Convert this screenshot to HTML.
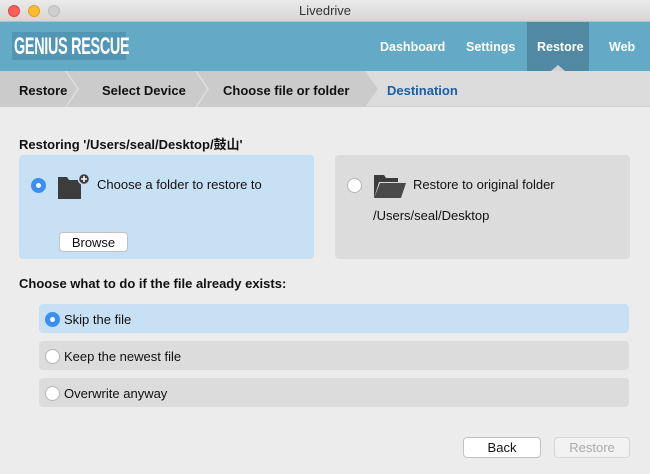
<!DOCTYPE html>
<html><head><style>
*{margin:0;padding:0;box-sizing:border-box}
body{width:650px;height:474px;overflow:hidden;background:#ececec;font-family:"Liberation Sans","Noto Sans CJK SC",sans-serif;font-size:13px;color:#111;position:relative}
.abs{position:absolute}
.title{top:0;left:0;width:650px;height:22px;background:linear-gradient(#ebebeb,#d6d6d6);border-bottom:1px solid #bdbdbd;text-align:center;line-height:22px;font-size:13px;color:#333}
.dot{top:5px;width:12px;height:12px;border-radius:50%}
.hdr{top:22px;left:0;width:650px;height:49px;background:#64a9c6}
.nav{top:22px;height:49px;line-height:51px;color:#fff;font-weight:bold;font-size:12.5px}
.bc{top:71px;left:0;width:650px;height:36px;background:#dcdcdc;border-bottom:1px solid #d0d0d0}
.bct{top:71px;line-height:39px;font-weight:bold;font-size:13px}
.radio{width:15px;height:15px;border-radius:50%;background:#fff;border:1px solid #b5b5b5}
.radio.on{background:#3a8ef6;border-color:#3a8ef6}
.radio.on::after{content:"";position:absolute;left:4px;top:4px;width:5px;height:5px;border-radius:50%;background:#fff}
.btn{background:#fff;border:1px solid #c2c2c2;border-radius:4px;text-align:center;font-size:13px}
.opt{left:39px;width:590px;height:29px;border-radius:4px;background:#dcdcdc;line-height:32px;padding-left:25px;font-size:13px}
</style></head><body>
<div class="abs title">Livedrive</div>
<div class="abs dot" style="left:8px;background:#fc5f57;border:1px solid #e0443e"></div>
<div class="abs dot" style="left:28px;background:#fdbc2e;border:1px solid #dea123"></div>
<div class="abs dot" style="left:48px;background:#cfcfcf;border:1px solid #bcbcbc"></div>
<div class="abs hdr"></div>
<div class="abs" style="left:12px;top:32px;width:114px;height:28px;background:#5296b6"></div>
<div class="abs" style="left:14px;top:32px;line-height:30px;color:#fff;font-weight:bold;font-size:24px;letter-spacing:-0.5px;transform:scaleX(.6);transform-origin:left;white-space:nowrap">GENIUS RESCUE</div>
<div class="abs" style="left:527px;top:22px;width:62px;height:49px;background:#5189a3"></div>
<div class="abs" style="left:551px;top:65px;width:0;height:0;border-left:7px solid transparent;border-right:7px solid transparent;border-bottom:6px solid #d2d2d2"></div>
<div class="abs nav" style="left:380px">Dashboard</div>
<div class="abs nav" style="left:466px">Settings</div>
<div class="abs nav" style="left:537px">Restore</div>
<div class="abs nav" style="left:609px">Web</div>
<div class="abs bc"></div>
<svg class="abs" style="left:0;top:71px" width="380" height="36">
<polygon points="0,0 365,0 378,18 365,36 0,36" fill="#cbcbcb"/>
<polyline points="66,0 78,18 66,36" fill="none" stroke="#dedede" stroke-width="1.5"/>
<polyline points="196,0 208,18 196,36" fill="none" stroke="#dedede" stroke-width="1.5"/>
</svg>
<div class="abs bct" style="left:19px">Restore</div>
<div class="abs bct" style="left:102px">Select Device</div>
<div class="abs bct" style="left:223px">Choose file or folder</div>
<div class="abs bct" style="left:387px;color:#1a5ea8">Destination</div>
<div class="abs" style="left:19px;top:134px;font-weight:bold;font-size:13px">Restoring '/Users/seal/Desktop/鼓山'</div>
<div class="abs" style="left:19px;top:155px;width:295px;height:104px;background:#c8e0f4;border-radius:4px"></div>
<div class="abs" style="left:335px;top:155px;width:295px;height:104px;background:#dcdcdc;border-radius:4px"></div>
<div class="abs radio on" style="left:31px;top:178px"></div>
<svg class="abs" style="left:57px;top:172px" width="34" height="28"><path d="M1 5h9l2 3h12v19H1z" fill="#3c3c3c"/><circle cx="27" cy="7" r="5.5" fill="#3c3c3c" stroke="#c8e0f4" stroke-width="1.5"/><path d="M27 4v6M24 7h6" stroke="#fff" stroke-width="1.5"/></svg>
<div class="abs" style="left:97px;top:177px">Choose a folder to restore to</div>
<div class="abs btn" style="left:59px;top:232px;width:69px;height:20px;line-height:19px">Browse</div>
<div class="abs radio" style="left:347px;top:178px"></div>
<svg class="abs" style="left:373px;top:173px" width="34" height="26"><path d="M1 2h10l2 3h12v4H6L1 25z" fill="#3c3c3c"/><path d="M7 10h26l-5 15H1z" fill="#4a4a4a"/></svg>
<div class="abs" style="left:413px;top:177px">Restore to original folder</div>
<div class="abs" style="left:373px;top:208px">/Users/seal/Desktop</div>
<div class="abs" style="left:19px;top:276px;font-weight:bold;font-size:13px">Choose what to do if the file already exists:</div>
<div class="abs opt" style="top:304px;background:#c8e0f4">Skip the file</div>
<div class="abs opt" style="top:341px">Keep the newest file</div>
<div class="abs opt" style="top:378px">Overwrite anyway</div>
<div class="abs radio on" style="left:45px;top:312px"></div>
<div class="abs radio" style="left:45px;top:349px"></div>
<div class="abs radio" style="left:45px;top:386px"></div>
<div class="abs btn" style="left:463px;top:437px;width:78px;height:21px;line-height:20px">Back</div>
<div class="abs btn" style="left:554px;top:437px;width:76px;height:21px;line-height:20px;background:#f2f2f2;color:#aaa;border-color:#d6d6d6">Restore</div>
</body></html>
